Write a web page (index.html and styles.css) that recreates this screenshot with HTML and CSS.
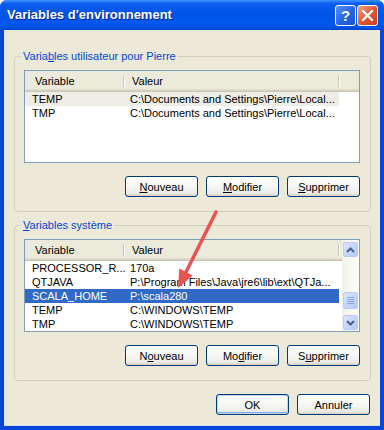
FILE: index.html
```html
<!DOCTYPE html>
<html>
<head>
    <meta charset="utf-8">
    <title>Variables d'environnement</title>
    <link rel="stylesheet" href="styles.css">
</head>
<body>
<div class="window">
    <div class="titlebar">
        <span class="title">Variables d'environnement</span>
        <div class="title-buttons">
            <span class="tbtn help">?</span>
            <span class="tbtn close">
                <svg width="13" height="13" viewBox="0 0 13 13"><path d="M2 2 L11 11 M11 2 L2 11" stroke="#fff" stroke-width="2.4" stroke-linecap="round"/></svg>
            </span>
        </div>
    </div>

    <div class="client">
        <div class="group">
            <span class="group-title">Varia<u>b</u>les utilisateur pour Pierre</span>
            <div class="listview">
                <div class="lv-content">
                    <div class="lv-header">
                        <span class="hcol col-var">Variable</span>
                        <span class="hcol col-val">Valeur</span>
                    </div>
                    <div class="row inactive"><span class="col-var">TEMP</span><span class="col-val">C:\Documents and Settings\Pierre\Local...</span></div>
                    <div class="row"><span class="col-var">TMP</span><span class="col-val">C:\Documents and Settings\Pierre\Local...</span></div>
                </div>
            </div>
            <div class="buttons">
                <button class="btn"><u>N</u>ouveau</button>
                <button class="btn"><u>M</u>odifier</button>
                <button class="btn"><u>S</u>upprimer</button>
            </div>
        </div>

        <div class="group">
            <span class="group-title"><u>V</u>ariables système</span>
            <div class="listview">
                <div class="lv-content">
                    <div class="lv-header">
                        <span class="hcol col-var">Variable</span>
                        <span class="hcol col-val">Valeur</span>
                    </div>
                    <div class="row"><span class="col-var">PROCESSOR_R...</span><span class="col-val">170a</span></div>
                    <div class="row"><span class="col-var">QTJAVA</span><span class="col-val">P:\Program Files\Java\jre6\lib\ext\QTJa...</span></div>
                    <div class="row selected"><span class="col-var">SCALA_HOME</span><span class="col-val">P:\scala280</span></div>
                    <div class="row"><span class="col-var">TEMP</span><span class="col-val">C:\WINDOWS\TEMP</span></div>
                    <div class="row"><span class="col-var">TMP</span><span class="col-val">C:\WINDOWS\TEMP</span></div>
                </div>
                <div class="scrollbar">
                    <span class="sb-btn">
                        <svg width="9" height="6" viewBox="0 0 9 6"><path d="M1 5 L4.5 1.5 L8 5" fill="none" stroke="#4D6185" stroke-width="2"/></svg>
                    </span>
                    <span class="sb-thumb">
                        <svg width="7" height="7" viewBox="0 0 7 7"><path d="M0 0.5H7M0 2.5H7M0 4.5H7M0 6.5H7" stroke="#8CA7E6" stroke-width="1"/></svg>
                    </span>
                    <span class="sb-btn sb-down">
                        <svg width="9" height="6" viewBox="0 0 9 6"><path d="M1 1 L4.5 4.5 L8 1" fill="none" stroke="#4D6185" stroke-width="2"/></svg>
                    </span>
                </div>
            </div>
            <div class="buttons">
                <button class="btn">N<u>o</u>uveau</button>
                <button class="btn">Mo<u>d</u>ifier</button>
                <button class="btn">S<u>u</u>pprimer</button>
            </div>
        </div>

        <div class="dialog-buttons">
            <button class="btn default">OK</button>
            <button class="btn">Annuler</button>
        </div>
    </div>

    <!-- annotation arrow drawn over the screenshot -->
    <svg class="arrow" width="384" height="430" viewBox="0 0 384 430">
        <line x1="216" y1="212" x2="186" y2="272" stroke="#E8524F" stroke-width="3.5" stroke-linecap="round"/>
        <polygon points="178,288 192.7,275.4 179.3,268.6" fill="#E8524F"/>
    </svg>
</div>
</body>
</html>
```

FILE: styles.css
```css
body {
    margin: 0;
    background: #fff;
    font-family: 'Liberation Sans', Arial, sans-serif;
    font-size: 11px;
    color: #000;
}
.window {
    position: relative;
    width: 384px;
    height: 430px;
    display: flex;
    flex-direction: column;
    background: #0846D8;
    border-radius: 7px 7px 0 0;
    overflow: hidden;
}
.titlebar {
    height: 30px;
    flex-shrink: 0;
    display: flex;
    align-items: center;
    justify-content: space-between;
    padding: 0 6px 0 7px;
    background: linear-gradient(180deg, #3D95FF, #0A5DF0 12%, #0055E5 45%, #0058EE 80%, #0050DE 94%, #003DCF);
}
.title {
    color: #fff;
    font-weight: bold;
    font-size: 13px;
    text-shadow: 1px 1px #0A1F8C;
    padding-bottom: 1px;
}
.title-buttons {
    display: flex;
    gap: 1px;
}
.tbtn {
    box-sizing: border-box;
    width: 21px;
    height: 21px;
    border: 1px solid #fff;
    border-radius: 3px;
    display: flex;
    align-items: center;
    justify-content: center;
    color: #fff;
    font-weight: bold;
    font-size: 15px;
}
.help {
    background: linear-gradient(135deg, #5B92F8, #2662E6 55%, #1A50D6);
}
.close {
    background: linear-gradient(135deg, #F0A487, #E0532E 55%, #C9401B);
}
.client {
    flex: 1;
    margin: 0 4px 4px 4px;
    padding: 26px 9px 0 10px;
    background: #ECE9D8;
    box-shadow: inset 1px 0 #D6DFF5, inset 0 -1px #D6DFF5;
}
.group {
    position: relative;
    border: 1px solid #D0D0BF;
    border-radius: 4px;
    padding: 13px 10px 14px 9px;
    margin-bottom: 13px;
}
.group-title {
    position: absolute;
    top: -8px;
    left: 6px;
    padding: 0 2px;
    background: #ECE9D8;
    color: #0046D5;
    line-height: 14px;
}
.listview {
    box-sizing: border-box;
    height: 93px;
    border: 1px solid #7F9DB9;
    background: #fff;
    display: flex;
}
.lv-content {
    flex: 1;
}
.lv-header {
    display: flex;
    height: 21px;
    background: #EBEADB;
    box-shadow: inset 0 -1px #CBC7B8, inset 0 -2px #D6D2C2, inset 0 -3px #E2DECD;
}
.hcol {
    position: relative;
    box-sizing: border-box;
    line-height: 20px;
}
.hcol::after {
    content: '';
    position: absolute;
    right: 0;
    top: 4px;
    bottom: 5px;
    width: 1px;
    background: #C7C5B2;
    box-shadow: 1px 0 #fff;
}
.hcol.col-var {
    padding-left: 10px;
}
.hcol.col-val {
    padding-left: 8px;
}
.col-var {
    box-sizing: border-box;
    width: 99px;
    padding-left: 7px;
    white-space: nowrap;
}
.col-val {
    box-sizing: border-box;
    width: 215px;
    padding-left: 6px;
    white-space: nowrap;
}
.row {
    display: flex;
    width: 314px;
    height: 14px;
    line-height: 14px;
}
.row.inactive {
    background: #EEEDE6;
}
.row.selected {
    background: #316AC5;
    color: #fff;
}
.scrollbar {
    width: 17px;
    flex-shrink: 0;
    display: flex;
    flex-direction: column;
    align-items: center;
    padding: 2px 0 1px;
    background: linear-gradient(90deg, #F3F1EC, #FEFEFB);
}
.sb-btn, .sb-thumb {
    box-sizing: border-box;
    width: 15px;
    height: 15px;
    border: 1px solid #BACCF4;
    border-radius: 2px;
    background: linear-gradient(135deg, #DCE6FD, #C2D3FC 60%, #B6C9F7);
    display: flex;
    align-items: center;
    justify-content: center;
}
.sb-thumb {
    height: 17px;
    margin-top: 35px;
}
.sb-down {
    margin-top: auto;
}
.buttons {
    display: flex;
    justify-content: flex-end;
    gap: 8px;
    margin-top: 13px;
}
.btn {
    box-sizing: border-box;
    width: 73px;
    height: 21px;
    padding: 0;
    border: 1px solid #003C74;
    border-radius: 3px;
    background: linear-gradient(180deg, #FFFFFF, #F4F4F0 60%, #ECEBE6 85%, #D6D0C5);
    font-family: 'Liberation Sans', Arial, sans-serif;
    font-size: 11px;
    color: #000;
}
.btn.default {
    box-shadow: inset 0 0 0 1px #BCD4F6, inset 0 -1px 0 1px #89ADE4;
}
.dialog-buttons {
    display: flex;
    justify-content: flex-end;
    gap: 8px;
    padding-right: 1px;
}
.arrow {
    position: absolute;
    left: 0;
    top: 0;
    pointer-events: none;
}
```
